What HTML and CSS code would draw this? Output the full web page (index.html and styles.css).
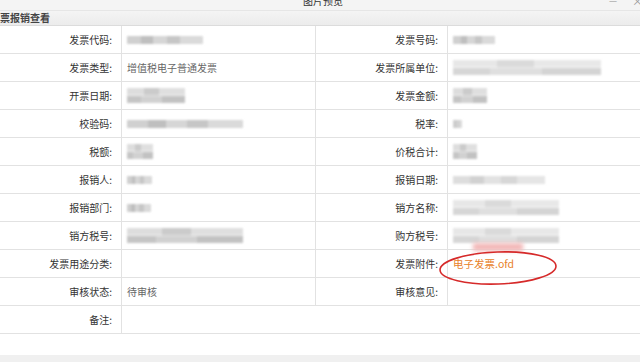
FILE: index.html
```html
<!DOCTYPE html>
<html lang="zh">
  <head>
    <meta charset="UTF-8" />
    <meta name="viewport" content="width=device-width, initial-scale=1.0" />
    <title>图片预览</title>
    <link rel="stylesheet" href="styles.css">
  </head>
  <body>
    <div class="titlebar">
      <span class="title">图片预览</span>
      <span class="win-btn min">—</span>
      <span class="win-btn close">×</span>
    </div>
    <div class="header"><span class="header-text">发票报销查看</span></div>

    <div class="form">
      <div class="label">发票代码:</div>
      <div class="value mid"><span class="blur w76"></span></div>
      <div class="label">发票号码:</div>
      <div class="value"><span class="blur w42"></span></div>

      <div class="label">发票类型:</div>
      <div class="value mid">增值税电子普通发票</div>
      <div class="label">发票所属单位:</div>
      <div class="value"><span class="blur w148 tall light"></span></div>

      <div class="label">开票日期:</div>
      <div class="value mid"><span class="blur w58 tall"></span></div>
      <div class="label">发票金额:</div>
      <div class="value"><span class="blur w34 tall"></span></div>

      <div class="label">校验码:</div>
      <div class="value mid"><span class="blur w116"></span></div>
      <div class="label">税率:</div>
      <div class="value"><span class="blur w9"></span></div>

      <div class="label">税额:</div>
      <div class="value mid"><span class="blur w26 tall"></span></div>
      <div class="label">价税合计:</div>
      <div class="value"><span class="blur w24 tall"></span></div>

      <div class="label">报销人:</div>
      <div class="value mid"><span class="blur w25"></span></div>
      <div class="label">报销日期:</div>
      <div class="value"><span class="blur w92 light"></span></div>

      <div class="label">报销部门:</div>
      <div class="value mid"><span class="blur w24"></span></div>
      <div class="label">销方名称:</div>
      <div class="value"><span class="blur w106 tall light"></span></div>

      <div class="label">销方税号:</div>
      <div class="value mid"><span class="blur w116 tall"></span></div>
      <div class="label">购方税号:</div>
      <div class="value"><span class="blur w106 tall light"></span><span class="pink"></span></div>

      <div class="label">发票用途分类:</div>
      <div class="value mid"></div>
      <div class="label">发票附件:</div>
      <div class="value attach">
        <span class="file">电子发票.ofd</span>
        <svg class="circle" width="128" height="40" viewBox="0 0 128 40">
          <ellipse cx="63" cy="20" rx="58" ry="16" fill="none" stroke="#d62a2a" stroke-width="1.6" transform="rotate(-2 63 20)" />
        </svg>
      </div>

      <div class="label">审核状态:</div>
      <div class="value mid">待审核</div>
      <div class="label">审核意见:</div>
      <div class="value"></div>

      <div class="label">备注:</div>
      <div class="value wide"></div>
    </div>

    <div class="footer"></div>
  </body>
</html>
```

FILE: styles.css
```css
body {
  margin: 0;
  padding: 0;
  width: 640px;
  height: 362px;
  overflow: hidden;
  background-color: #f0f0f0;
  font-family: "Noto Sans CJK SC", "Microsoft YaHei", sans-serif;
  font-size: 10px;
  color: #333;
}

.titlebar {
  height: 10px;
  background-color: #f4f4f4;
  border-bottom: 1px solid #e6e6e6;
  position: relative;
  overflow: hidden;
}
.title {
  position: absolute;
  left: 303px;
  top: -6px;
  line-height: 14px;
  color: #333;
}
.win-btn {
  position: absolute;
  top: -6px;
  line-height: 14px;
  color: #999;
}
.win-btn.min {
  left: 609px;
  font-size: 9px;
}
.win-btn.close {
  left: 632px;
  font-size: 11px;
}

.header {
  height: 14px;
  padding-top: 0;
  background: linear-gradient(#f4f4f4, #ececec);
  border-bottom: 1px solid #dcdcdc;
  line-height: 14px;
  overflow: hidden;
}
.header-text {
  display: inline-block;
  margin-left: -10px;
  font-weight: bold;
  color: #444;
}

.form {
  display: grid;
  grid-template-columns: 122px 194px 132px 1fr;
  grid-auto-rows: 28px;
  background-color: #fff;
}

.label,
.value {
  box-sizing: border-box;
  border-bottom: 1px solid #e2e2e2;
  display: flex;
  align-items: center;
}
.label {
  justify-content: flex-end;
  padding-right: 9px;
  border-right: 1px solid #e2e2e2;
  color: #333;
}
.value {
  padding-left: 5px;
  color: #666;
}
.value.mid {
  border-right: 1px solid #e2e2e2;
}
.value.wide {
  grid-column: span 3;
}

.blur {
  display: inline-block;
  height: 8px;
  background: linear-gradient(90deg, #c8c8c8 0 18%, #b4b4b4 18% 34%, #cfcfcf 34% 52%, #bdbdbd 52% 70%, #d4d4d4 70% 100%);
  filter: blur(1.2px);
  opacity: 0.85;
}
.blur.tall {
  height: 15px;
  background:
    linear-gradient(90deg, #d8d8d8 0 30%, #c2c2c2 30% 55%, #dadada 55% 100%) top / 100% 50% no-repeat,
    linear-gradient(90deg, #bcbcbc 0 25%, #cacaca 25% 60%, #b8b8b8 60% 100%) bottom / 100% 50% no-repeat;
}
.blur.light {
  opacity: 0.6;
}
.w9 { width: 9px; }
.w24 { width: 24px; }
.w25 { width: 25px; }
.w26 { width: 26px; }
.w34 { width: 34px; }
.w42 { width: 42px; }
.w58 { width: 58px; }
.w76 { width: 76px; }
.w92 { width: 92px; }
.w106 { width: 106px; }
.w116 { width: 116px; }
.w148 { width: 148px; }

.pink {
  position: absolute;
  margin-left: 20px;
  margin-top: 22px;
  width: 50px;
  height: 8px;
  background-color: #f2b8b8;
  filter: blur(2px);
}

.attach {
  position: relative;
  overflow: visible;
}
.file {
  color: #e8822a;
  font-size: 10.5px;
}
.circle {
  position: absolute;
  left: -13px;
  top: -2px;
  pointer-events: none;
}

.footer {
  height: 21px;
  background-color: #fff;
}
```
